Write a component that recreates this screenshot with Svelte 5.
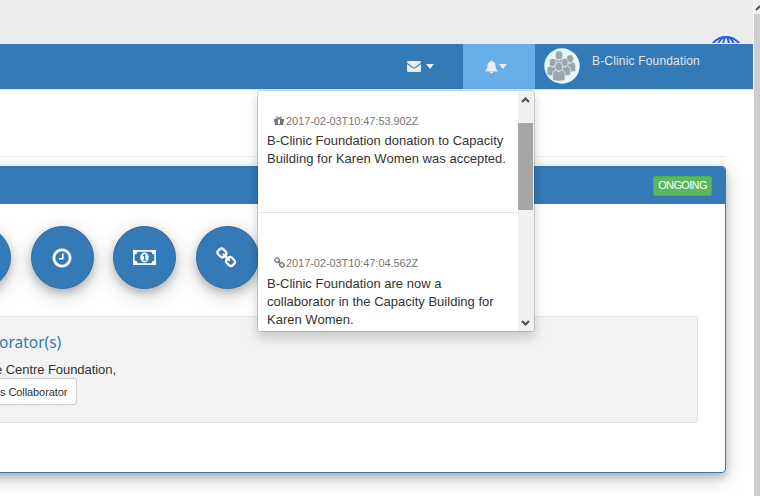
<script>
  const chain = 'M1456 1216q0-40-28-68l-208-208q-28-28-68-28-42 0-72 32 3 3 19 18.5t21.5 21.5 15 19 13 25.5 3.5 27.5q0 40-28 68t-68 28q-15 0-27.5-3.5t-25.5-13-19-15-21.5-21.5-18.5-19q-33 31-33 73 0 40 28 68l206 207q27 27 68 27 40 0 68-26l147-146q28-28 28-67zm-703-705q0-40-28-68l-206-207q-28-28-68-28-39 0-68 27l-147 146q-28 28-28 67 0 40 28 68l208 208q27 27 68 27 42 0 72-31-3-3-19-18.5t-21.5-21.5-15-19-13-25.5-3.5-27.5q0-40 28-68t68-28q15 0 27.5 3.5t25.5 13 19 15 21.5 21.5 18.5 19q33-31 33-73zm895 705q0 120-85 203l-147 146q-83 83-203 83-121 0-204-85l-206-207q-83-83-83-203 0-123 88-209l-88-88q-86 88-208 88-120 0-204-84l-208-208q-84-84-84-204t85-203l147-146q83-83 203-83 121 0 204 85l206 207q83 83 83 203 0 123-88 209l88 88q86-88 208-88 120 0 204 84l208 208q84 84 84 204z';
  const clock = 'M1024 544v448q0 14-9 23t-23 9h-320q-14 0-23-9t-9-23v-64q0-14 9-23t23-9h224v-352q0-14 9-23t23-9h64q14 0 23 9t9 23zm416 352q0-148-73-273t-198-198-273-73-273 73-198 198-73 273 73 273 198 198 273 73 273-73 198-198 73-273zm224 0q0 209-103 385.5t-279.5 279.5-385.5 103-385.5-103-279.5-279.5-103-385.5 103-385.5 279.5-279.5 385.5-103 385.5 103 279.5 279.5 103 385.5z';
  const people = [
    [15, 7.2, 1.02], [26, 10.8, 0.95], [20.7, 14.6, 0.95], [8.7, 14.6, 0.95], [14.8, 18.6, 1.05]
  ];
</script>

<div class="page">
  <main>
    <div class="banner">
      <svg class="globe" width="36" height="36" viewBox="0 0 40 40" fill="none" stroke="#2f5fe8" stroke-width="2.2">
        <circle cx="20" cy="20" r="18.8" /><ellipse cx="20" cy="20" rx="11" ry="18.8" /><ellipse cx="20" cy="20" rx="4" ry="18.8" /><path d="M6 8Q20 13 34 8" />
      </svg>
    </div>
    <nav>
      <div class="item mail">
        <svg width="14" height="14" viewBox="0 0 14 14"><path fill="#ebebeb" d="M0 3.2Q0 2 1.2 2H12.8Q14 2 14 3.2V3.6L8.4 7.9Q7 8.9 5.600 7.9L0 3.6ZM0 4.9 5 8.8Q7 10.100 9 8.800L14 4.900V11.800Q14 13 12.800 13H1.200Q0 13 0 11.800Z" /></svg>
        <i class="caret"></i>
      </div>
      <div class="item bell">
        <svg width="13" height="14" viewBox="0 0 13 14"><path fill="#ebebeb" d="M5.700 1Q5.700.2 6.500.2T7.300 1V1.400C9.700 1.900 10.600 3.700 10.600 5.500 10.600 8.400 11.400 9.900 12.800 10.900V11.500H.2V10.900C1.600 9.900 2.400 8.400 2.400 5.500 2.400 3.700 3.300 1.900 5.700 1.400ZM4.800 11.800H8.200Q8 13.500 6.500 13.500T4.800 11.800Z" /></svg>
        <i class="caret"></i>
      </div>
      <svg class="avatar" width="36" height="36" viewBox="0 0 36 36">
        <circle cx="18" cy="18" r="17.700" fill="#e6f8fd" />
        {#each people as [x, y, s]}
          <g transform="translate({x} {y}) scale({s})" fill="#98a7ac" stroke="#e6f8fd" stroke-width=".7">
            <path d="M-6 13V7.500Q-6 4 -2.500 3.200L0 5 2.500 3.200Q6 4 6 7.500V13Q0 15 -6 13Z" />
            <ellipse cx="0" cy="0" rx="3.700" ry="4.300" />
          </g>
        {/each}
      </svg>
      <span class="user">B-Clinic Foundation</span>
    </nav>
    <div class="rule"></div>
    <div class="clip">
      <section class="card">
        <header><span class="status">ONGOING</span></header>
        <div class="circles">
          <b class="circle"></b>
          <b class="circle"><svg width="22" height="22" viewBox="0 0 1792 1792"><path fill="#fff" d={clock} /></svg></b>
          <b class="circle"><svg width="23" height="15" viewBox="0 0 23 15"><path fill="#fff" fill-rule="evenodd" d="M0 0H23V15H0ZM4.500 1.700A3 3 0 0 1 1.700 4.500V10.500A3 3 0 0 1 4.500 13.300H18.500A3 3 0 0 1 21.300 10.500V4.500A3 3 0 0 1 18.500 1.700Z" /><ellipse cx="11.500" cy="7.500" rx="4.200" ry="4.900" fill="#fff" /><path d="M9.700 5.300 11.300 3.900H12.300V9.700H13.500V10.800H9.900V9.700H11V5.800L10.300 6.200Z" fill="#337ab7" /></svg></b>
          <b class="circle"><svg width="22" height="22" viewBox="0 0 1792 1792"><path fill="#fff" d={chain} /></svg></b>
        </div>
        <div class="well">
          <h4>orator(s)</h4>
          <p>e Centre Foundation,</p>
          <button>s Collaborator</button>
        </div>
      </section>
    </div>
  </main>

  <aside class="pagebar"><svg width="6" height="14" viewBox="0 0 6 14"><path d="M2 10 6 6" fill="none" stroke="#505050" stroke-width="2" /></svg></aside>

  <div class="menu">
    <div class="feed">
      <article>
        <time><svg width="10" height="10" viewBox="0 0 10 10"><path fill="#777" fill-rule="evenodd" d="M0 3H3.300C1.200 2.800 1.300.3 3 .4 4 .4 4.500 1.200 5 2 5.500 1.200 6 .4 7 .4 8.700.3 8.800 2.800 6.700 3H10V5.800H9.300V9H.7V5.800H0ZM4 3.500V8H6V3.500ZM3 1.300C2.200 1.300 2.200 2.300 3 2.300H4.200ZM7 1.300 5.800 2.300H7C7.800 2.300 7.800 1.300 7 1.300Z" /></svg><span>2017-02-03T10:47:53.902Z</span></time>
        <p class="wide">B-Clinic Foundation donation to Capacity<br />Building for Karen Women was accepted.</p>
      </article>
      <article class="second">
        <time class="linked"><svg width="12" height="12" viewBox="0 0 1792 1792"><path fill="#777" d={chain} /></svg><span>2017-02-03T10:47:04.562Z</span></time>
        <p>B-Clinic Foundation are now a<br />collaborator in the Capacity Building for<br />Karen Women.</p>
      </article>
    </div>
    <div class="bar">
      <svg width="15" height="17" viewBox="0 0 15 17"><path d="M4 11 7.500 7.500 11 11" fill="none" stroke="#505050" stroke-width="2.200" /></svg>
      <i></i>
      <svg width="15" height="17" viewBox="0 0 15 17"><path d="M4 7 7.500 10.500 11 7" fill="none" stroke="#505050" stroke-width="2.200" /></svg>
    </div>
  </div>
</div>

<style>
  .page { position: relative; display: flex; width: 760px; height: 496px; overflow: hidden; background: #fff; font: 13px/18px "Liberation Sans", Arial, sans-serif; color: #333; }
  .page :global(svg) { display: block; flex: none; }
  main { width: 753px; display: flex; flex-direction: column; }
  .banner { height: 44px; background: #ebebeb; overflow: hidden; display: flex; justify-content: flex-end; box-sizing: border-box; padding: 36px 9px 0 0; border-bottom: 1px solid #ebebeb; flex: none; }
  .banner { contain: paint; clip-path: inset(0); }
  nav { height: 45px; background: #337ab7; display: flex; justify-content: flex-end; flex: none; box-shadow: 0 1px 0 #d8e0e6; }
  .item { display: flex; box-sizing: border-box; align-items: flex-start; }
  .mail { width: 56px; padding-top: 15px; gap: 5px; }
  .mail .caret { margin-top: 5px; }
  .bell { width: 72px; background: #67aee9; padding: 16px 0 0 22px; gap: 1px; }
  .caret { border: 4px solid transparent; border-top: 5px solid #ebebeb; border-bottom: 0; margin-top: 4px; }
  .avatar { margin: 4px 12px 0 9px; }
  .user { width: 161px; padding-top: 8px; color: #e6e6e6; font-size: 12px; letter-spacing: .17px; }
  .rule { width: 726px; height: 68px; border-bottom: 1px solid #eee; box-sizing: border-box; flex: none; }
  .clip { height: 335px; overflow: hidden; padding-top: 9px; box-sizing: border-box; flex: none; }
  .card { width: 746px; height: 307px; margin-left: -20px; padding-left: 19px; box-sizing: border-box; border: 1px solid #337ab7; border-radius: 4px; background: #fff; box-shadow: 0 4px 8px rgba(0,0,0,.2), 0 6px 20px rgba(0,0,0,.19); }
  header { height: 37px; background: #337ab7; display: flex; justify-content: flex-end; align-items: flex-start; border-radius: 0 3px 0 0; }
  .status { margin: 9px 13px 0 0; width: 59px; height: 20px; box-sizing: border-box; text-align: center; border: 1px solid #4cae4c; background: #5cb85c; color: #fff; font-size: 11px; line-height: 17px; letter-spacing: -.65px; border-radius: 2px; }
  .circles { display: flex; gap: 19.5px; margin: 22px 0 0 -52px; }
  .circle { width: 63px; height: 63px; flex: none; border-radius: 50%; border: 1px solid #2e6da4; box-sizing: border-box; background: #337ab7; display: flex; align-items: center; justify-content: center; box-shadow: 0 4px 8px rgba(0,0,0,.2), 0 6px 20px rgba(0,0,0,.19); }
  .well { margin-top: 27px; width: 698px; height: 107px; box-sizing: border-box; border: 1px solid #e3e3e3; border-left: 0; border-radius: 0 3px 3px 0; background: #f3f3f3; padding-top: 15px; }
  h4 { margin: 0; font: 15.500px/20px "Noto Sans", sans-serif; color: #337ab7; margin-left: -1px; }
  p { margin: 0; letter-spacing: .01px; }
  .wide { letter-spacing: .02px; }
  .well p { margin: 9px 0 0 -5px; letter-spacing: -.06px; }
  button { display: block; margin: -1px 0 0; height: 27px; padding: 0 9px 0 0; border: 1px solid #ccc; border-left: 0; border-radius: 0 3px 3px 0; background: #fff; color: #333; font: 11px "Liberation Sans", Arial, sans-serif; letter-spacing: -.08px; }
  .pagebar { width: 7px; background: #cdcdcd; box-sizing: border-box; border-left: 1px solid #fff; }
  .pagebar svg { background: #f0f0f0; }
  .menu { position: absolute; left: 257px; top: 90px; width: 278px; height: 242px; box-sizing: border-box; display: flex; border: 1px solid #ccc; border-color: rgba(0,0,0,.15); border-radius: 3px; background: #fff; background-clip: padding-box; box-shadow: 0 6px 12px rgba(0,0,0,.175); overflow: hidden; }
  .feed { flex: 1; white-space: nowrap; }
  article { padding: 20px 0 0 9px; height: 122px; border-bottom: 1px solid #e5e5e5; box-sizing: border-box; width: 259px; }
  .second { padding-top: 40px; border: 0; }
  time { display: flex; align-items: center; gap: 2px; margin-left: 7px; color: #777; font-size: 11px; height: 21px; padding-bottom: 1px; box-sizing: border-box; letter-spacing: -.07px; }
  .linked { gap: 0; height: 22px; padding-bottom: 2px; }
  .bar { width: 16px; background: #f0f0f0; display: flex; flex-direction: column; }
  .bar i { height: 87px; margin: 15px 1px 104px 0; background: #a6a6a6; }
</style>
